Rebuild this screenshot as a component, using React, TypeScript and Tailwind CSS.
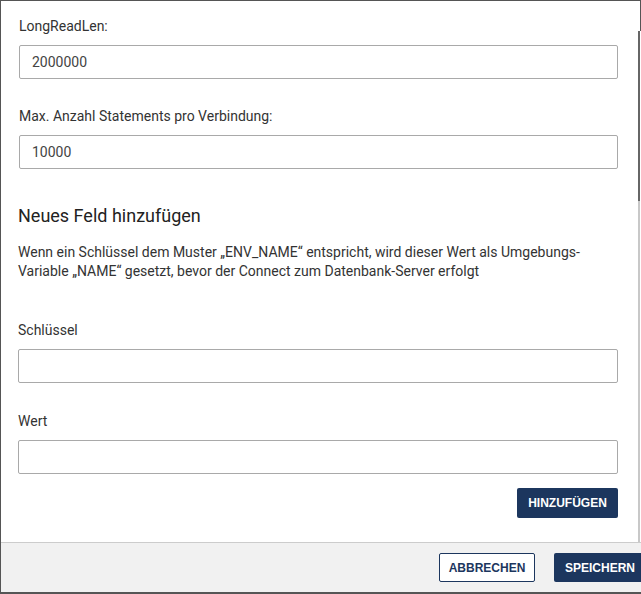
import React from "react";

const font = { fontFamily: "Roboto, 'Liberation Sans', sans-serif" };
const btnFont = { fontFamily: "'Liberation Sans', Arial, sans-serif" };

function Field({ label, value, top }: { label: string; value?: string; top: string }) {
  return (
    <div className={top}>
      <label className="block text-[14px] leading-[20px] text-[#333]">{label}</label>
      <input
        readOnly
        value={value ?? ""}
        className="mt-[9px] block h-[34px] w-full rounded-[2px] border border-[#a9a9a9] bg-white px-[12px] text-[14px] text-[#444] outline-none"
      />
    </div>
  );
}

export default function App() {
  return (
    <div
      style={font}
      className="relative flex h-[594px] w-[641px] flex-col overflow-hidden border-l border-t border-b-2 border-[#555] bg-white"
    >
      <div className="flex-1 pl-[17px] pr-[23px]">
        <div className="pl-px">
          <Field label="LongReadLen:" value="2000000" top="pt-[15px]" />
          <Field label="Max. Anzahl Statements pro Verbindung:" value="10000" top="mt-[27px]" />
        </div>

        <h2 className="mt-[35px] text-[18px] leading-[24px] text-[#222]">Neues Feld hinzufügen</h2>
        <p className="mt-[15px] text-[14px] leading-[19px] text-[#333]">
          Wenn ein Schlüssel dem Muster „ENV_NAME“ entspricht, wird dieser Wert als Umgebungs-Variable „NAME“ gesetzt,
          bevor der Connect zum Datenbank-Server erfolgt
        </p>

        <Field label="Schlüssel" top="mt-[39px]" />
        <Field label="Wert" top="mt-[28px]" />

        <div className="mt-[14px] flex justify-end">
          <button
            style={btnFont}
            className="h-[30px] w-[101px] rounded-[2px] bg-[#1c365e] text-[12px] font-bold text-white"
          >
            HINZUFÜGEN
          </button>
        </div>
      </div>

      <div className="flex h-[50px] items-center border-t border-[#ccc] bg-[#f1f1f1] pl-[438px]">
        <div className="flex shrink-0 gap-[19px]">
          <button
            style={btnFont}
            className="h-[29px] w-[96px] rounded-[2px] border border-[#1c365e] bg-white text-[12px] font-bold text-[#1c365e]"
          >
            ABBRECHEN
          </button>
          <button
            style={btnFont}
            className="h-[29px] shrink-0 rounded-[2px] bg-[#1c365e] px-[11px] text-[12px] font-bold whitespace-nowrap text-white"
          >
            SPEICHERN
          </button>
        </div>
      </div>

      <div className="absolute right-0 top-0 h-[30px] w-px bg-[#555]" />
      <div className="absolute right-px top-[30px] h-[170px] w-[2px] bg-[#666]" />
      <div className="absolute right-px top-[200px] h-[341px] w-[2px] bg-[#c8c8c8]" />
    </div>
  );
}
